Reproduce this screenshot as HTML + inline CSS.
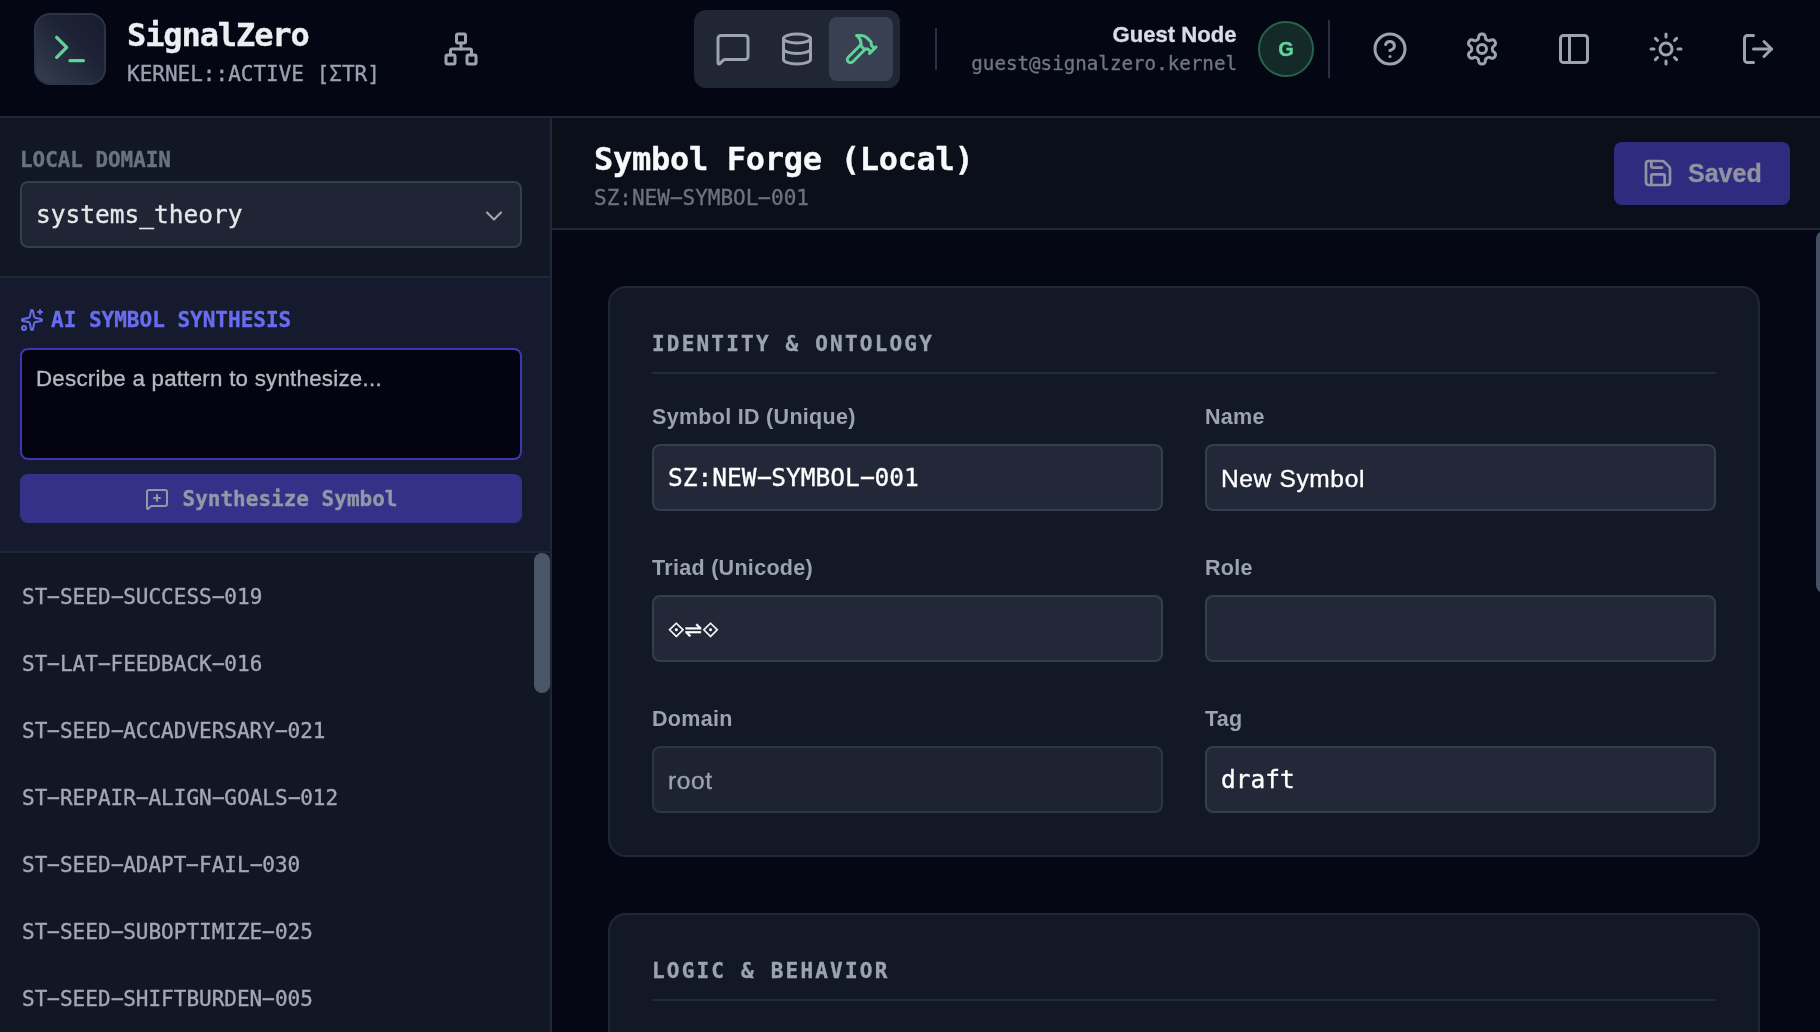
<!DOCTYPE html>
<html lang="en">
<head>
<meta charset="utf-8">
<title>SignalZero — Symbol Forge</title>
<style>
*{box-sizing:border-box;margin:0;padding:0}
html,body{width:1820px;height:1032px;overflow:hidden;background:#040613}
body{position:relative;font-family:"Liberation Sans","DejaVu Sans",sans-serif;color:#e5e7eb}
.mono{font-family:"DejaVu Sans Mono","Liberation Mono",monospace}
#app{position:absolute;left:0;top:0;width:1820px;height:1032px;overflow:hidden;will-change:transform;-webkit-text-stroke:.35px}
.abs{position:absolute}
.h{display:inline-block;font-style:normal;transform:translateY(-.04em) scaleX(2.03)}
svg.ic{fill:none;stroke:currentColor;stroke-width:2;stroke-linecap:round;stroke-linejoin:round;display:block}
/* header */
#hdr{left:0;top:0;width:1820px;height:118px;background:#040613;border-bottom:2px solid #1f2837}
#logo{left:34px;top:13px;width:72px;height:72px;border-radius:16px;border:2px solid #2b3446;background:linear-gradient(45deg,#363e50 0%,#1d2335 60%,#171c2d 100%);color:#5dd39a}
#logo svg{position:absolute;left:14px;top:14px}
#brand{left:127px;top:15px;font-size:32px;letter-spacing:-1.1px;font-weight:bold;color:#eceef2;line-height:40px;white-space:nowrap}
#kern{left:127px;top:59px;font-size:21px;color:#9aa1ae;line-height:30px;white-space:nowrap}
#net{left:443px;top:31px;color:#9ca3af}
#tabs{left:694px;top:10px;width:206px;height:78px;border-radius:12px;background:#212635}
#tabs .tb{position:absolute;top:7px;width:64px;height:64px;border-radius:8px;color:#9ca3af}
#tabs .tb svg{position:absolute;left:14px;top:14px}
#tabs .tb.on{background:#394051;color:#5dd39a}
.vdiv{width:2px;background:#283041}
#uname{right:583.5px;top:21px;font-size:22.1px;font-weight:bold;color:#d9dce3;line-height:28px;white-space:nowrap}
#umail{right:583px;top:51px;font-size:19.2px;color:#6f7683;line-height:26px;white-space:nowrap}
#ava{left:1258px;top:21px;width:56px;height:56px;border-radius:50%;background:#132a28;border:2px solid #276449;color:#5fd69a;font-weight:bold;font-size:20px;line-height:52px;text-align:center}
.hi{top:31px;color:#9ca3af}
/* sidebar */
#side{left:0;top:118px;width:552px;height:914px;background:#111725;border-right:2px solid #1f2837}
#sec1{left:0;top:0;width:550px;height:160px;border-bottom:2px solid #1f2837}
#lbl1{left:20px;top:28px;font-size:20.9px;font-weight:bold;color:#6b7280;line-height:28px;white-space:nowrap}
#sel{left:20px;top:63px;width:502px;height:67px;border-radius:8px;background:#1f2534;border:2px solid #353d4e;color:#e5e7eb;font-size:24.5px;line-height:63px;padding-left:14px}
#sel svg{position:absolute;right:12px;top:19px;color:#a3a9b5;stroke-width:1.8}
#sec2{left:0;top:160px;width:550px;height:275px;background:#161a2e;border-bottom:2px solid #1f2837}
#lbl2{left:20px;top:28px;font-size:21px;font-weight:bold;color:#686df0;line-height:28px;white-space:nowrap;padding-left:31px}
#lbl2 svg{position:absolute;left:0;top:2px}
#ta{left:20px;top:70px;width:502px;height:112px;border-radius:8px;background:#03040f;border:2px solid #3f37b0;color:#b4b8c0;font-size:22.3px;letter-spacing:.25px;line-height:28px;padding:15px 14px}
#btn{left:20px;top:196px;width:502px;height:49px;border-radius:8px;background:#353189;color:#9397a6;font-size:21px;font-weight:bold;line-height:50px;text-align:center;white-space:nowrap}
#btn svg{display:inline-block;vertical-align:-5px;margin-right:14px}
#list{left:0;top:435px;width:550px;height:479px;overflow:hidden}
#list div{position:absolute;left:22px;font-size:21px;line-height:28px;color:#a3a8b4;white-space:nowrap}
#sb{left:534px;top:435px;width:16px;height:140px;border-radius:8px;background:#4a5567}
/* main */
#mhead{left:552px;top:118px;width:1268px;height:112px;background:#0b0f1a;border-bottom:2px solid #1f2837}
#title{left:42px;top:19px;font-size:32px;letter-spacing:-.29px;font-weight:bold;color:#f8f9fb;line-height:44px;white-space:nowrap}
#sub{left:42px;top:66px;font-size:21px;color:#6b7280;line-height:28px;white-space:nowrap}
#save{left:1062px;top:24px;width:176px;height:63px;border-radius:8px;background:#2f2c7f;color:#9092a2;font-size:25px;font-weight:bold;line-height:63px;white-space:nowrap}
#save svg{position:absolute;left:28px;top:15px}
#save span{position:absolute;left:74px;top:0}
#main{left:552px;top:230px;width:1268px;height:802px;background:#050714;overflow:hidden}
#msb{left:1264px;top:1px;width:16px;height:362px;border-radius:8px;background:#465063}
.card{left:56px;width:1152px;border-radius:18px;background:#121826;border:2px solid #1f2837}
.card h3{position:absolute;left:42px;top:42px;font-size:21px;font-weight:bold;color:#9ca3af;letter-spacing:2.2px;line-height:28px;white-space:nowrap;font-family:"DejaVu Sans Mono","Liberation Mono",monospace}
.card .hr{position:absolute;left:42px;top:84px;width:1064px;height:2px;background:#232a3a}
.fl{position:absolute;font-size:21.5px;font-weight:bold;color:#9ca3af;line-height:28px;white-space:nowrap;letter-spacing:.3px;margin-top:1px;-webkit-text-stroke:0}
.in{position:absolute;width:511px;height:67px;border-radius:8px;background:#232838;border:2px solid #363d4d;color:#fff;font-size:24.5px;line-height:64px;padding-left:14px;white-space:nowrap}
.in.sans{letter-spacing:.65px;line-height:66px}
.in.tri{font-family:"DejaVu Sans","FreeSans",sans-serif;font-size:21px;line-height:66px}
.in.dim{background:#1e2332;border-color:#2e3545;color:#9ca3af}
</style>
</head>
<body>
<div id="app">
<div id="hdr" class="abs">
  <div id="logo" class="abs"><svg class="ic" width="40" height="40" viewBox="0 0 24 24"><polyline points="4 17 10 11 4 5"/><line x1="12" x2="20" y1="19" y2="19"/></svg></div>
  <div id="brand" class="abs mono">SignalZero</div>
  <div id="kern" class="abs mono">KERNEL::ACTIVE [ΣTR]</div>
  <svg id="net" class="ic abs" width="36" height="36" viewBox="0 0 24 24"><rect x="16" y="16" width="6" height="6" rx="1"/><rect x="2" y="16" width="6" height="6" rx="1"/><rect x="9" y="2" width="6" height="6" rx="1"/><path d="M5 16v-3a1 1 0 0 1 1-1h12a1 1 0 0 1 1 1v3"/><path d="M12 12V8"/></svg>
  <div id="tabs" class="abs">
    <div class="tb" style="left:7px"><svg class="ic" width="36" height="36" viewBox="0 0 24 24"><path d="M22 17a2 2 0 0 1-2 2H6.828a2 2 0 0 0-1.414.586l-2.202 2.202A.71.71 0 0 1 2 21.286V5a2 2 0 0 1 2-2h16a2 2 0 0 1 2 2z"/></svg></div>
    <div class="tb" style="left:71px"><svg class="ic" width="36" height="36" viewBox="0 0 24 24"><ellipse cx="12" cy="5" rx="9" ry="3"/><path d="M3 5V19A9 3 0 0 0 21 19V5"/><path d="M3 12A9 3 0 0 0 21 12"/></svg></div>
    <div class="tb on" style="left:135px"><svg class="ic" width="36" height="36" viewBox="0 0 24 24"><path d="m15 12-8.5 8.5c-.83.83-2.17.83-3 0 0 0 0 0 0 0a2.12 2.12 0 0 1 0-3L12 9"/><path d="M17.64 15 22 10.64"/><path d="m20.91 11.7-1.25-1.25c-.6-.6-.93-1.4-.93-2.25v-.86L16.01 4.6a5.56 5.56 0 0 0-3.94-1.64H9l.92.82A6.18 6.18 0 0 1 12 8.4v1.56l2 2h2.47l2.26 1.91"/></svg></div>
  </div>
  <div class="vdiv abs" style="left:935px;top:28px;height:42px"></div>
  <div id="uname" class="abs">Guest Node</div>
  <div id="umail" class="abs mono">guest@signalzero.kernel</div>
  <div id="ava" class="abs">G</div>
  <div class="vdiv abs" style="left:1328px;top:20px;height:58px"></div>
  <svg class="ic abs hi" style="left:1372px" width="36" height="36" viewBox="0 0 24 24"><circle cx="12" cy="12" r="10"/><path d="M9.09 9a3 3 0 0 1 5.83 1c0 2-3 3-3 3"/><path d="M12 17h.01"/></svg>
  <svg class="ic abs hi" style="left:1464px" width="36" height="36" viewBox="0 0 24 24"><path d="M12.22 2h-.44a2 2 0 0 0-2 2v.18a2 2 0 0 1-1 1.73l-.43.25a2 2 0 0 1-2 0l-.15-.08a2 2 0 0 0-2.73.73l-.22.38a2 2 0 0 0 .73 2.73l.15.1a2 2 0 0 1 1 1.72v.51a2 2 0 0 1-1 1.74l-.15.09a2 2 0 0 0-.73 2.73l.22.38a2 2 0 0 0 2.73.73l.15-.08a2 2 0 0 1 2 0l.43.25a2 2 0 0 1 1 1.73V20a2 2 0 0 0 2 2h.44a2 2 0 0 0 2-2v-.18a2 2 0 0 1 1-1.73l.43-.25a2 2 0 0 1 2 0l.15.08a2 2 0 0 0 2.73-.73l.22-.39a2 2 0 0 0-.73-2.73l-.15-.08a2 2 0 0 1-1-1.74v-.5a2 2 0 0 1 1-1.74l.15-.09a2 2 0 0 0 .73-2.73l-.22-.38a2 2 0 0 0-2.73-.73l-.15.08a2 2 0 0 1-2 0l-.43-.25a2 2 0 0 1-1-1.73V4a2 2 0 0 0-2-2z"/><circle cx="12" cy="12" r="3"/></svg>
  <svg class="ic abs hi" style="left:1556px" width="36" height="36" viewBox="0 0 24 24"><rect width="18" height="18" x="3" y="3" rx="2"/><path d="M9 3v18"/></svg>
  <svg class="ic abs hi" style="left:1648px" width="36" height="36" viewBox="0 0 24 24"><circle cx="12" cy="12" r="4"/><path d="M12 2v2"/><path d="M12 20v2"/><path d="m4.93 4.93 1.41 1.41"/><path d="m17.66 17.66 1.41 1.41"/><path d="M2 12h2"/><path d="M20 12h2"/><path d="m6.34 17.66-1.41 1.41"/><path d="m19.07 4.93-1.41 1.41"/></svg>
  <svg class="ic abs hi" style="left:1740px" width="36" height="36" viewBox="0 0 24 24"><path d="M9 21H5a2 2 0 0 1-2-2V5a2 2 0 0 1 2-2h4"/><polyline points="16 17 21 12 16 7"/><line x1="21" x2="9" y1="12" y2="12"/></svg>
</div>

<div id="side" class="abs">
  <div id="sec1" class="abs">
    <div id="lbl1" class="abs mono">LOCAL DOMAIN</div>
    <div id="sel" class="abs mono">systems_theory<svg class="ic" width="28" height="28" viewBox="0 0 24 24"><path d="m6 9 6 6 6-6"/></svg></div>
  </div>
  <div id="sec2" class="abs">
    <div id="lbl2" class="abs mono"><svg class="ic" width="24" height="24" viewBox="0 0 24 24"><path d="M11.017 2.814a1 1 0 0 1 1.966 0l1.051 5.558a2 2 0 0 0 1.594 1.594l5.558 1.051a1 1 0 0 1 0 1.966l-5.558 1.051a2 2 0 0 0-1.594 1.594l-1.051 5.558a1 1 0 0 1-1.966 0l-1.051-5.558a2 2 0 0 0-1.594-1.594l-5.558-1.051a1 1 0 0 1 0-1.966l5.558-1.051a2 2 0 0 0 1.594-1.594z"/><path d="M20 2v4"/><path d="M22 4h-4"/><circle cx="4" cy="20" r="2"/></svg>AI SYMBOL SYNTHESIS</div>
    <div id="ta" class="abs">Describe a pattern to synthesize...</div>
    <div id="btn" class="abs mono"><svg class="ic" width="24" height="24" viewBox="0 0 24 24"><path d="M22 17a2 2 0 0 1-2 2H6.828a2 2 0 0 0-1.414.586l-2.202 2.202A.71.71 0 0 1 2 21.286V5a2 2 0 0 1 2-2h16a2 2 0 0 1 2 2z"/><path d="M12 8v6"/><path d="M9 11h6"/></svg>Synthesize Symbol</div>
  </div>
  <div id="list" class="abs mono">
    <div style="top:30px">ST<i class="h">-</i>SEED<i class="h">-</i>SUCCESS<i class="h">-</i>019</div>
    <div style="top:97px">ST<i class="h">-</i>LAT<i class="h">-</i>FEEDBACK<i class="h">-</i>016</div>
    <div style="top:164px">ST<i class="h">-</i>SEED<i class="h">-</i>ACCADVERSARY<i class="h">-</i>021</div>
    <div style="top:231px">ST<i class="h">-</i>REPAIR<i class="h">-</i>ALIGN<i class="h">-</i>GOALS<i class="h">-</i>012</div>
    <div style="top:298px">ST<i class="h">-</i>SEED<i class="h">-</i>ADAPT<i class="h">-</i>FAIL<i class="h">-</i>030</div>
    <div style="top:365px">ST<i class="h">-</i>SEED<i class="h">-</i>SUBOPTIMIZE<i class="h">-</i>025</div>
    <div style="top:432px">ST<i class="h">-</i>SEED<i class="h">-</i>SHIFTBURDEN<i class="h">-</i>005</div>
  </div>
  <div id="sb" class="abs"></div>
</div>

<div id="mhead" class="abs">
  <div id="title" class="abs mono">Symbol Forge (Local)</div>
  <div id="sub" class="abs mono">SZ:NEW<i class="h">-</i>SYMBOL<i class="h">-</i>001</div>
  <div id="save" class="abs"><svg class="ic" width="32" height="32" viewBox="0 0 24 24"><path d="M15.2 3a2 2 0 0 1 1.4.6l3.8 3.8a2 2 0 0 1 .6 1.4V19a2 2 0 0 1-2 2H5a2 2 0 0 1-2-2V5a2 2 0 0 1 2-2z"/><path d="M17 21v-7a1 1 0 0 0-1-1H8a1 1 0 0 0-1 1v7"/><path d="M7 3v4a1 1 0 0 0 1 1h7"/></svg><span>Saved</span></div>
</div>

<div id="main" class="abs">
  <div class="card abs" style="top:56px;height:571px">
    <h3>IDENTITY &amp; ONTOLOGY</h3>
    <div class="hr"></div>
    <div class="fl" style="left:42px;top:114px">Symbol ID (Unique)</div>
    <div class="fl" style="left:595px;top:114px">Name</div>
    <div class="in mono" style="left:42px;top:156px">SZ:NEW<i class="h">-</i>SYMBOL<i class="h">-</i>001</div>
    <div class="in sans" style="left:595px;top:156px">New Symbol</div>
    <div class="fl" style="left:42px;top:265px">Triad (Unicode)</div>
    <div class="fl" style="left:595px;top:265px">Role</div>
    <div class="in tri" style="left:42px;top:307px">⟐⇌⟐</div>
    <div class="in" style="left:595px;top:307px"></div>
    <div class="fl" style="left:42px;top:416px">Domain</div>
    <div class="fl" style="left:595px;top:416px">Tag</div>
    <div class="in dim sans" style="left:42px;top:458px">root</div>
    <div class="in mono" style="left:595px;top:458px">draft</div>
  </div>
  <div class="card abs" style="top:683px;height:400px">
    <h3>LOGIC &amp; BEHAVIOR</h3>
    <div class="hr"></div>
  </div>
  <div id="msb" class="abs"></div>
</div>
</div>
</body>
</html>
